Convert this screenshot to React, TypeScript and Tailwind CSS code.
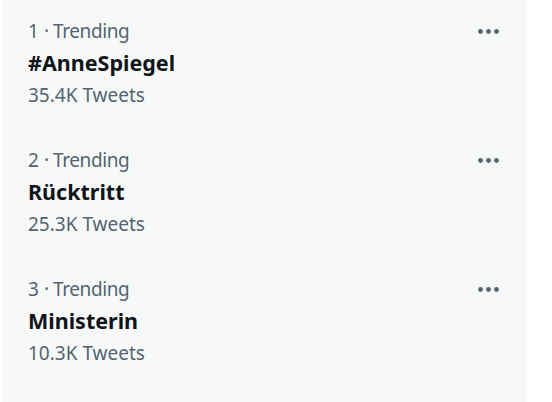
import React from "react";

const trends = [
  { rank: 1, name: "#AnneSpiegel", count: "35.4K Tweets" },
  { rank: 2, name: "Rücktritt", count: "25.3K Tweets" },
  { rank: 3, name: "Ministerin", count: "10.3K Tweets" },
];

function Dots() {
  return (
    <svg width="21" height="5" viewBox="0 0 21 5" className="block">
      <circle cx="2.5" cy="2.5" r="2.4" fill="#536471" />
      <circle cx="10.5" cy="2.5" r="2.4" fill="#536471" />
      <circle cx="18.5" cy="2.5" r="2.4" fill="#536471" />
    </svg>
  );
}

export default function App() {
  return (
    <div
      className="w-[552px] h-[402px] bg-white overflow-hidden"
      style={{ fontFamily: '"Noto Sans", "Open Sans", sans-serif' }}
    >
      <div className="ml-[2px] w-[525px] h-full bg-[#f7f9f9]">
        {trends.map((t) => (
          <div
            key={t.rank}
            className="flex items-start justify-between pl-[26px] pr-[28px] pt-[15px] pb-[18px]"
          >
            <div className="flex flex-col leading-[32px]">
              <span className="flex text-[19px] text-[#536471]">
                <span>{t.rank}</span>
                <span className="ml-[5px]">·</span>
                <span className="ml-[4px] tracking-[-0.4px]">Trending</span>
              </span>
              <span className="text-[21.5px] font-bold text-[#0f1419]">{t.name}</span>
              <span className="text-[19px] text-[#536471]">{t.count}</span>
            </div>
            <div className="h-[32px] flex items-center">
              <Dots />
            </div>
          </div>
        ))}
      </div>
    </div>
  );
}
